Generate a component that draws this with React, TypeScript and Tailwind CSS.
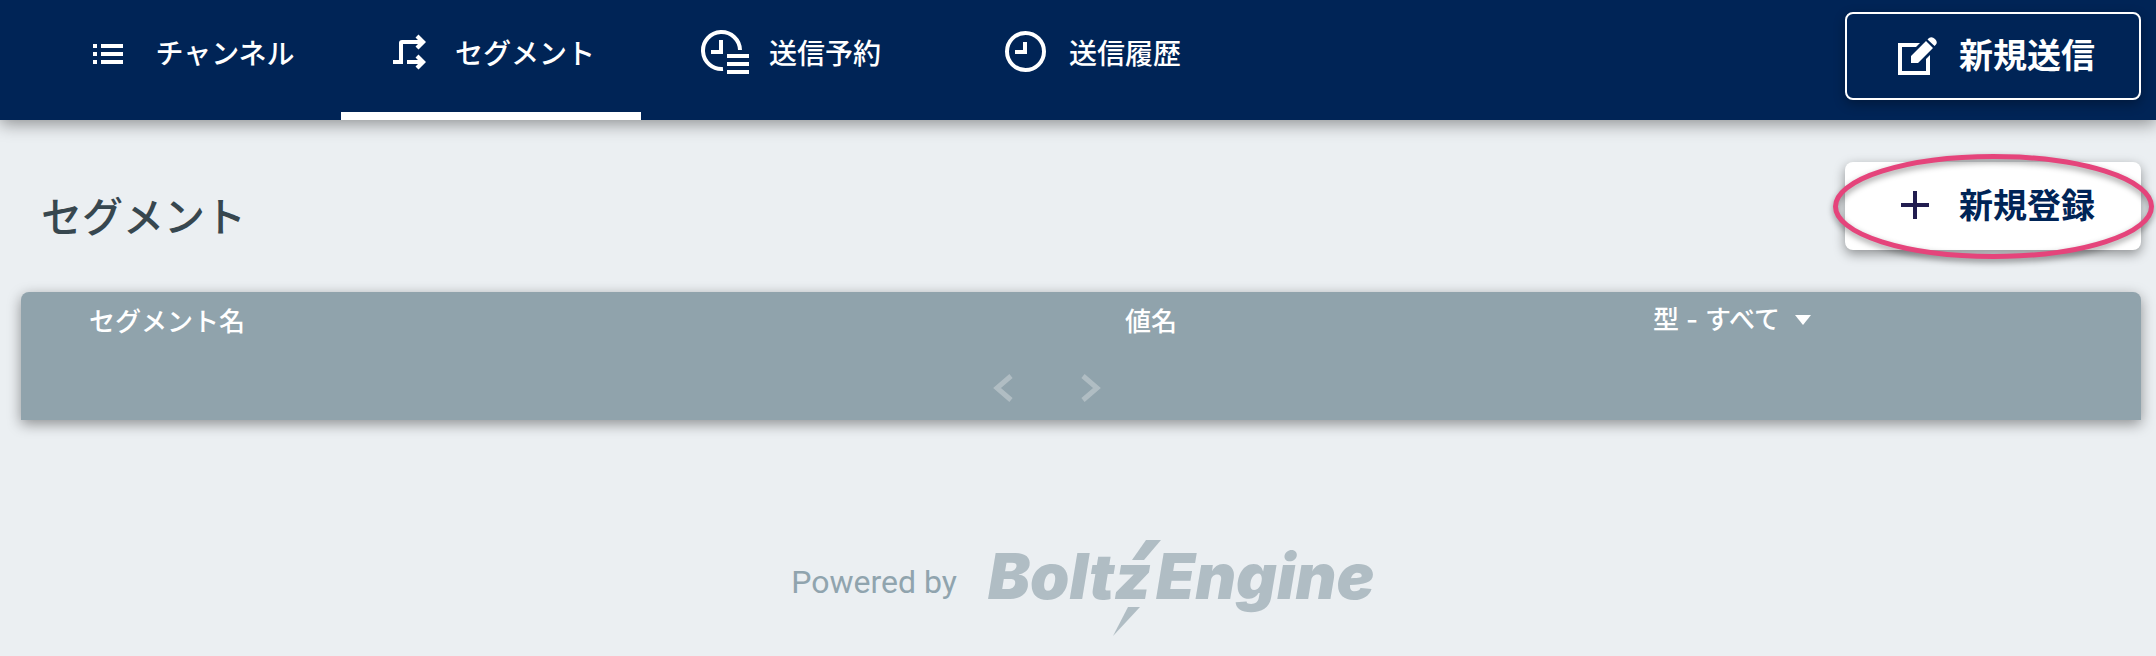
import { useState } from 'react';
import type { ReactNode } from 'react';

type TabId = 'channel' | 'segment' | 'reservation' | 'history';

function ChannelIcon() {
  return (
    <svg className="h-12 w-12" viewBox="0 0 48 48" fill="currentColor" aria-hidden="true">
      <path d="M6 16h4v4H6zM14 16h22v4H14zM6 24h4v4H6zM14 24h22v4H14zM6 32h4v4H6zM14 32h22v4H14z" />
    </svg>
  );
}

function SegmentIcon() {
  return (
    <svg className="h-12 w-12" viewBox="0 0 48 48" fill="currentColor" aria-hidden="true">
      <path d="M6 32h6V15q0-3 3-3h16l-2.500-2.500 3-3L39 14l-7.500 7.500-3-3L31 16H16v20H6z" />
      <path d="M20 32h11l-2.500-2.500 3-3L39 34l-7.500 7.500-3-3L31 36H20z" />
    </svg>
  );
}

function ReservationIcon() {
  return (
    <svg className="h-12 w-12" viewBox="0 0 48 48" aria-hidden="true">
      <path d="M22 40.900A18.500 18.500 0 1 1 39 22" fill="none" stroke="currentColor" strokeWidth="4" />
      <path d="M18 12h4v14H10v-4h8zM26 26h22v4H26zM26 34h22v4H26zM26 42h22v4H26z" fill="currentColor" />
    </svg>
  );
}

function HistoryIcon() {
  return (
    <svg className="h-12 w-12" viewBox="0 0 48 48" aria-hidden="true">
      <circle cx="24.500" cy="23.500" r="18.500" fill="none" stroke="currentColor" strokeWidth="4" />
      <path d="M22 14h4v12H14v-4h8z" fill="currentColor" />
    </svg>
  );
}

function ComposeIcon() {
  return (
    <svg className="h-12 w-12" viewBox="0 0 48 48" fill="currentColor" aria-hidden="true">
      <path d="M7 11h22l-4 4H11v24h24V27l4-4v20H7z" />
      <path d="M20 31v-7l15-15 7 7-15 15zM36.500 7.500l1.500-1.500q3-2 6 1t1 5.500l-1.500 1.500z" />
    </svg>
  );
}

function PlusIcon() {
  return (
    <svg className="h-12 w-12 text-[#221d50]" viewBox="0 0 48 48" fill="currentColor" aria-hidden="true">
      <path d="M22 9h4v12h12v4H26v12h-4V25H10v-4h12z" />
    </svg>
  );
}

function Logo() {
  return (
    <svg className="h-[98px] w-96 overflow-visible text-[#b0bdc4]" viewBox="0 0 384 98" fill="currentColor">
      <g fontFamily="Inter, sans-serif" fontWeight="900" fontStyle="italic" fontSize="63">
        <text x="-1" y="60">Boltz</text>
        <text x="167" y="60">Engine</text>
      </g>
      <path d="M157 1h15l-17 20h-12z" />
      <path d="M139 68h12l-27 29z" />
    </svg>
  );
}

const tabs: { id: TabId; label: string; icon: ReactNode }[] = [
  { id: 'channel', label: 'チャンネル', icon: <ChannelIcon /> },
  { id: 'segment', label: 'セグメント', icon: <SegmentIcon /> },
  { id: 'reservation', label: '送信予約', icon: <ReservationIcon /> },
  { id: 'history', label: '送信履歴', icon: <HistoryIcon /> },
];

export default function App() {
  const [active, setActive] = useState<TabId>('segment');
  const [type, setType] = useState('all');

  return (
    <div className="min-h-screen bg-[#ebeff2] font-['Noto_Sans_CJK_JP',sans-serif] text-[#37474f]">
      <header className="relative flex h-[120px] justify-between bg-[#002456] pl-[41px] pr-[15px] text-white shadow-[0_4px_16px_rgba(0,0,0,0.4)]">
        <nav className="flex">
          {tabs.map((tab) => (
            <button
              key={tab.id}
              className={`flex w-[300px] items-center justify-center gap-5 border-b-8 pb-2 text-[28px] font-medium leading-none ${
                active === tab.id ? 'border-white' : 'border-transparent'
              }`}
              onClick={() => setActive(tab.id)}
            >
              {tab.icon}
              {tab.label}
            </button>
          ))}
        </nav>
        <button className="mt-3 flex h-[88px] w-[296px] items-center justify-center gap-5 rounded-lg border-2 border-white text-[34px] font-bold leading-none shadow-[0_4px_12px_rgba(0,0,0,0.3)]">
          <ComposeIcon />
          <span className="pb-1">新規送信</span>
        </button>
      </header>

      <main className="pl-[21px] pr-[15px] pt-[42px]">
        <div className="flex items-center justify-between">
          <h1 className="pl-5 pt-4 text-[41px] font-medium leading-none">セグメント</h1>
          <div className="relative">
            <button className="flex h-[88px] w-[296px] items-center justify-center gap-5 rounded-lg bg-white text-[34px] font-bold leading-none text-[#002456] shadow-[0_4px_12px_rgba(0,0,0,0.4)]">
              <PlusIcon />
              <span className="pb-1">新規登録</span>
            </button>
            {/* highlight ring */}
            <svg
              className="pointer-events-none absolute -left-4 -top-3 h-28 w-[328px] overflow-visible drop-shadow-[0_3px_3px_rgba(0,0,0,0.4)]"
              viewBox="0 0 328 112"
              aria-hidden="true"
            >
              <ellipse cx="164.500" cy="56.500" rx="158" ry="50" fill="none" stroke="#e5447b" strokeWidth="5" />
            </svg>
          </div>
        </div>

        <section className="mt-[42px] rounded-t-lg bg-[#90a3ac] text-white shadow-[0_4px_14px_rgba(0,0,0,0.4)]">
          <table className="w-full table-fixed text-left text-[26px] leading-none">
            <thead>
              <tr className="h-15">
                <th className="w-1/2 pb-1 pl-[68px] font-medium">セグメント名</th>
                <th className="w-1/4 pb-1 pl-11 font-medium">値名</th>
                <th className="w-1/4 pl-[42px] font-medium">
                  <div className="flex items-center gap-3 pb-1">
                    <select
                      aria-label="型"
                      className="appearance-none bg-transparent font-[Inter,'Noto_Sans_CJK_JP',sans-serif] leading-none outline-none"
                      value={type}
                      onChange={(e) => setType(e.target.value)}
                    >
                      <option value="all">型 - すべて</option>
                    </select>
                    <svg className="h-[10px] w-4" viewBox="0 0 16 10" fill="currentColor" aria-hidden="true">
                      <path d="M0 0h16L8 10z" />
                    </svg>
                  </div>
                </th>
              </tr>
            </thead>
          </table>
          <div className="flex h-[68px] items-center justify-center gap-10 pr-[68px] pt-1 text-[#b0bdc3]">
            <button className="flex h-12 w-12 items-center justify-center" aria-label="前へ">
              <svg className="h-7 w-5" viewBox="0 0 20 28" fill="none" stroke="currentColor" strokeWidth="5">
                <path d="M18 2L4 14l14 12" />
              </svg>
            </button>
            <button className="flex h-12 w-12 items-center justify-center" aria-label="次へ">
              <svg className="h-7 w-5" viewBox="0 0 20 28" fill="none" stroke="currentColor" strokeWidth="5">
                <path d="M2 2l14 12L2 26" />
              </svg>
            </button>
          </div>
        </section>
      </main>

      <footer className="flex items-center justify-center gap-8 pl-2 pt-[119px]">
        <span className="pb-3 font-[Roboto,sans-serif] text-[32px] leading-none text-[#90a4ae]">Powered by</span>
        <Logo />
      </footer>
    </div>
  );
}
